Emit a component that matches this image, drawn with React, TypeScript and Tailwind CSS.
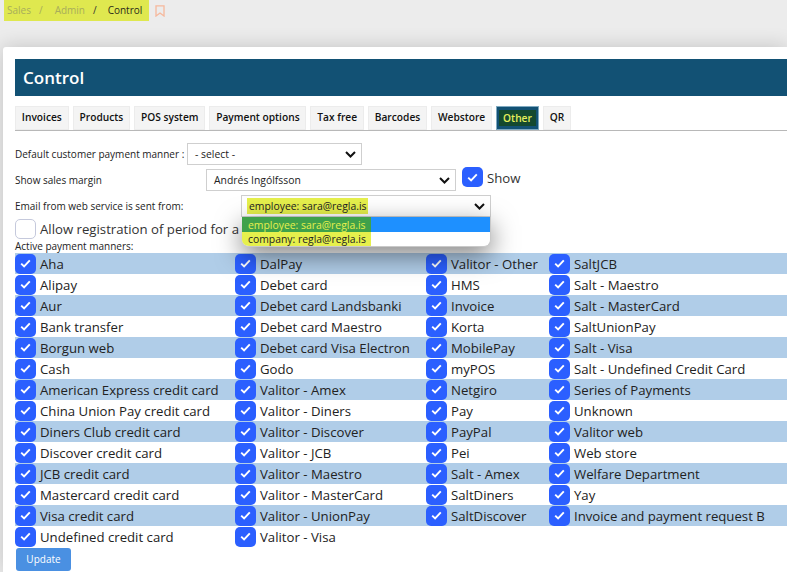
const tabs = ["Invoices", "Products", "POS system", "Payment options", "Tax free", "Barcodes", "Webstore", "Other", "QR"]

const rows = [
  ["Aha", "DalPay", "Valitor - Other", "SaltJCB"],
  ["Alipay", "Debet card", "HMS", "Salt - Maestro"],
  ["Aur", "Debet card Landsbanki", "Invoice", "Salt - MasterCard"],
  ["Bank transfer", "Debet card Maestro", "Korta", "SaltUnionPay"],
  ["Borgun web", "Debet card Visa Electron", "MobilePay", "Salt - Visa"],
  ["Cash", "Godo", "myPOS", "Salt - Undefined Credit Card"],
  ["American Express credit card", "Valitor - Amex", "Netgiro", "Series of Payments"],
  ["China Union Pay credit card", "Valitor - Diners", "Pay", "Unknown"],
  ["Diners Club credit card", "Valitor - Discover", "PayPal", "Valitor web"],
  ["Discover credit card", "Valitor - JCB", "Pei", "Web store"],
  ["JCB credit card", "Valitor - Maestro", "Salt - Amex", "Welfare Department"],
  ["Mastercard credit card", "Valitor - MasterCard", "SaltDiners", "Yay"],
  ["Visa credit card", "Valitor - UnionPay", "SaltDiscover", "Invoice and payment request B"],
  ["Undefined credit card", "Valitor - Visa", "", ""],
]

const Check = ({ on = true }: { on?: boolean }) => (
  <span className={`w-[21px] h-[20px] shrink-0 rounded-[5px] flex items-center justify-center ${on ? "bg-[#2b5fff]" : "bg-white border border-[#c5c9dc]"}`}>
    {on && (
      <svg width="11" height="9" viewBox="0 0 11 9" fill="none">
        <path d="M1.2 4.6 L4.1 7.4 L9.8 1.4" stroke="#fff" strokeWidth="1.9" />
      </svg>
    )}
  </span>
)

const Chevron = () => (
  <svg width="11" height="7" viewBox="0 0 11 7" fill="none">
    <path d="M1 1 L5.5 5.5 L10 1" stroke="#111" strokeWidth="2" />
  </svg>
)

const Select = ({ className, children }: any) => (
  <div className={`h-[22px] border border-[#cfcfcf] bg-white flex items-center justify-between pl-[7px] pr-[5px] text-[10.4px] text-[#222] ${className}`}>
    <span className="pt-[1px]">{children}</span>
    <Chevron />
  </div>
)

export default function App() {
  return (
    <div className="w-[787px] h-[572px] overflow-hidden bg-[#ececec] font-['Open_Sans','Noto_Sans',sans-serif]">
      <div className="h-[21px] flex items-start">
        <div className="ml-[4px] w-[145px] h-[21px] bg-[#dfe84f] flex items-center pl-[3px] text-[10px] text-[#a8ad5b]">
          <span>Sales</span>
          <span className="ml-[8px]">/</span>
          <span className="ml-[12px]">Admin</span>
          <span className="ml-[8px] text-[#333]">/</span>
          <span className="ml-[11px] text-[#2b2b1a]">Control</span>
        </div>
        <svg className="ml-[6px] mt-[5px]" width="10" height="12" viewBox="0 0 10 12" fill="none">
          <path d="M1 .8 H9 V11 L5 8 L1 11 Z" stroke="#f6b89c" strokeWidth="1.3" />
        </svg>
      </div>

      <div className="ml-[3px] mt-[26px] h-[525px] bg-white rounded-tl-[3px] pl-[12px] pt-[12px] shadow-[0_0_20px_rgba(0,0,0,0.18)]">
        <div className="h-[37px] bg-[#125174] flex items-center pl-[8px] text-white text-[17px] font-semibold">Control</div>

        <div className="mt-[10px] h-[25px] flex gap-[4px] border-b border-[#b8b8b8]">
          {tabs.map((t) => (
            t === "Other" ? (
              <div key={t} className="h-[24px] px-[2px] bg-[#125174] border border-[#7fa9c0] flex items-center">
                <span className="bg-[#14492f] text-[#e6f05c] text-[10.2px] font-semibold px-[4px] h-[16px] leading-[16px]">{t}</span>
              </div>
            ) : (
              <div key={t} className="h-[24px] px-[5.85px] bg-[#f4f4f4] border border-[#ececec] flex items-center text-[10.2px] font-semibold text-[#111]">{t}</div>
            )
          ))}
        </div>

        <div className="relative text-[10px] text-[#222]">
          <div className="mt-[12px] h-[22px] flex items-center">
            <span className="w-[172px] whitespace-nowrap">Default customer payment manner :</span>
            <Select className="w-[175px]">- select -</Select>
          </div>
          <div className="mt-[4px] h-[22px] flex items-center">
            <span className="w-[191px]">Show sales margin</span>
            <Select className="w-[250px]">Andrés Ingólfsson</Select>
            <span className="ml-[6px] -mt-[5px] flex items-center gap-[4px] text-[13.2px] text-[#333]"><Check /><span className="pt-[2px]">Show</span></span>
          </div>
          <div className="mt-[4px] h-[22px] flex items-center">
            <span className="w-[226px]">Email from web service is sent from:</span>
            <Select className="w-[250px]"><span className="bg-[#e6f04c] text-[#222] inline-block px-[2px] -ml-[2px] leading-[16px]">employee: sara@regla.is</span></Select>
          </div>
          <div className="mt-[2px] h-[20px] flex items-center gap-[4px] text-[13.2px] text-[#333]">
            <Check on={false} />
            <span className="pt-[2px]">Allow registration of period for a</span>
          </div>
          <div className="h-[14px] leading-[14px]">Active payment manners:</div>

          <div className="absolute left-[227px] top-[74px] w-[249px] h-[30px] z-10 bg-white rounded-b-[7px] overflow-hidden border-b border-r border-[#c9c9c9] shadow-[0_8px_26px_rgba(0,0,0,0.5)] text-[10.4px] leading-[14px]">
            <div className="h-[15px] bg-[#1e90ff]"><span className="bg-[#3fa14a] text-[#e6f04c] inline-block w-[129px] h-[15px] pl-[6px] pt-[1px]">employee: sara@regla.is</span></div>
            <div className="h-[14px]"><span className="bg-[#e6f04c] text-[#222] inline-block w-[129px] h-[14px] pl-[6px]">company: regla@regla.is</span></div>
          </div>
        </div>

        <div className="text-[13.2px] text-[#222]">
          {rows.map((r, i) => (
            <div key={i} className={`h-[21px] grid grid-cols-[220px_191px_123px_1fr] ${i % 2 === 0 && i < 13 ? "bg-[#b0cde8]" : ""}`}>
              {r.map((c, j) => (
                <div key={j} className="flex items-center gap-[4px] whitespace-nowrap">
                  {c && <Check />}
                  <span className="pt-[2px]">{c}</span>
                </div>
              ))}
            </div>
          ))}
        </div>

        <button className="block ml-[1px] mt-[1px] w-[55px] h-[23px] rounded-[3px] bg-[#4a90e2] text-white text-[10px]">Update</button>
      </div>
    </div>
  )
}
